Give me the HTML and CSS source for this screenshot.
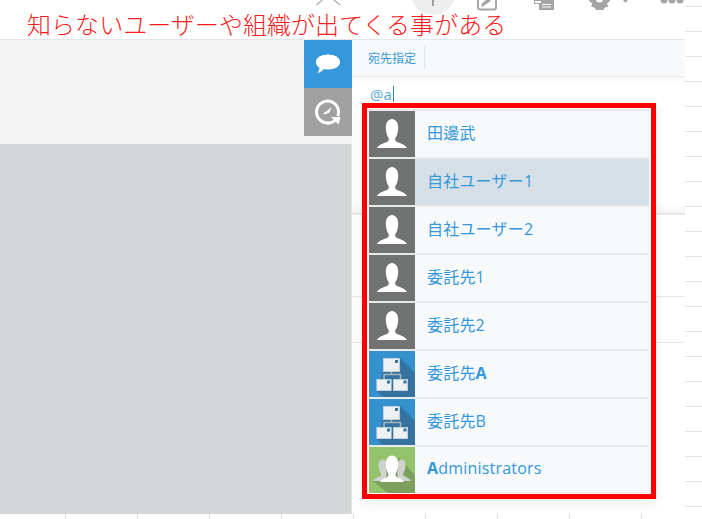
FILE: index.html
```html
<!DOCTYPE html>
<html lang="ja">
<head>
<meta charset="utf-8">
<title>宛先指定</title>
<link rel="stylesheet" href="styles.css">
</head>
<body>
<svg width="0" height="0" class="defs">
  <defs>
    <symbol id="user" viewBox="0 0 46 46">
      <rect width="46" height="46" fill="#717372"/>
      <path d="M8 37C10 33.500 14 32.500 18 31C19.500 30.300 20 29 19.800 27.500C18 25 16.800 21 16.800 17C16.800 11.500 19.200 8 23 8C26.800 8 29.200 11.500 29.200 17C29.200 21 28 25 26.200 27.500C26 29 26.500 30.300 28 31C32 32.500 36 33.500 38 37Z" fill="#fff"/>
    </symbol>
    <symbol id="org" viewBox="0 0 46 46">
      <rect width="46" height="46" fill="#3491cd"/>
      <path d="M31 7L46 22V46H14L7 39L14 20Z" fill="#34739f"/>
      <path d="M22.500 20V23.500M15 28V23.500H31.500V28" fill="none" stroke="#a9b5bd" stroke-width="1.600"/>
      <rect x="14.300" y="7.300" width="16.400" height="13.400" fill="#edf1f3" stroke="#c4d2dc" stroke-width="0.600"/>
      <rect x="7.800" y="28.300" width="14.400" height="11.400" fill="#edf1f3" stroke="#c4d2dc" stroke-width="0.600"/>
      <rect x="24.300" y="28.300" width="14.400" height="11.400" fill="#edf1f3" stroke="#c4d2dc" stroke-width="0.600"/>
      <rect x="26" y="9" width="3" height="3" fill="#34739f"/>
      <rect x="18" y="29.500" width="3" height="3" fill="#34739f"/>
      <rect x="34.500" y="29.500" width="3" height="3" fill="#34739f"/>
    </symbol>
    <symbol id="group" viewBox="0 0 46 46">
      <rect width="46" height="46" fill="#93c36d"/>
      <path d="M30 11L46 28V46H19L4 34Z" fill="#7c9f5c"/>
      <path d="M4 34C6 31 9 30 11 29C12 28 12 27 11.500 26C10 23 9.500 20 9.500 18C9.500 14.500 11.300 12.500 13.500 12.500C15.800 12.500 17.500 14.500 17.500 18V34Z" fill="#cfd2cd"/>
      <path d="M42 34C40 31 37 30 35 29C34 28 34 27 34.500 26C36 23 36.500 20 36.500 18C36.500 14.500 34.700 12.500 32.500 12.500C30.200 12.500 28.500 14.500 28.500 18V34Z" fill="#cfd2cd"/>
      <path d="M11 35C13 31.500 17 31 19 29.500C19.800 28.500 19.500 27 19 26C17.500 23 16.800 19.500 16.800 16.500C16.800 11.500 19.500 8.500 23 8.500C26.500 8.500 29.200 11.500 29.200 16.500C29.200 19.500 28.500 23 27 26C26.500 27 26.200 28.500 27 29.500C29 31 33 31.500 35 35Z" fill="#fff"/>
    </symbol>
  </defs>
</svg>

<header class="toolbar">
  <svg class="toolbar-icons" width="702" height="16" viewBox="0 0 702 16">
    <path d="M316.500 5L328 -5L340 5" fill="none" stroke="#aaa" stroke-width="1.200"/>
    <circle cx="433" cy="-7" r="22" fill="#eee"/>
    <rect x="432" y="0" width="2" height="6" fill="#9e9e9e"/>
    <path d="M478 -2V7C478 8.500 479 9.500 480.500 9.500H494C495.500 9.500 496 8.500 496 7V0" fill="none" stroke="#a5a5a5" stroke-width="2"/>
    <path d="M481 7.500L482 3.500L488 -2L491 1Z" fill="#a5a5a5"/>
    <path d="M534 0V4H539V10H554V0Z" fill="#a5a5a5"/>
    <path d="M535 1V3H541V1Z M542 4H551V5H542Z M542 6.500H551V7.500H542Z" fill="#fff"/>
    <path d="M589 -1H610V1L607 3.500L608.500 6.500L605 7.500L603.500 10H596L594.500 7.500L591 6.500L592.500 3.500L589 1Z" fill="#a5a5a5"/>
    <circle cx="599.500" cy="-1" r="3.500" fill="#fff"/>
    <path d="M623 0H628L625.500 3Z" fill="#a5a5a5"/>
    <circle cx="664" cy="0" r="3.500" fill="#a5a5a5"/>
    <circle cx="672" cy="0" r="3.500" fill="#a5a5a5"/>
    <circle cx="680" cy="0" r="3.500" fill="#a5a5a5"/>
  </svg>
  <h1 class="headline">知らないユーザーや組織が出てくる事がある</h1>
</header>

<main class="workspace">
  <section class="stage">
    <div class="stage-top">
      <div class="tabs">
        <div class="tab tab-comment">
          <svg width="26" height="20" viewBox="0 0 26 20"><path d="M13 0.500C20 0.500 25 3.500 25 8C25 12.500 20 15.500 13 15.500C11.500 15.500 10.500 15.400 9 15C7.500 16.500 5 18.500 2.500 19C3.500 17.500 4.300 15.500 4.500 14C2.500 12.500 1 10.500 1 8C1 3.500 6 0.500 13 0.500Z" fill="#fff"/></svg>
        </div>
        <div class="tab tab-history">
          <svg width="26" height="26" viewBox="0 0 26 26"><path d="M22.800 17A11 11 0 1 0 14 23.900" fill="none" stroke="#fff" stroke-width="3"/><path d="M12 24C15.500 24.300 18.500 23 20.500 21" fill="none" stroke="#fff" stroke-width="3"/><path d="M16 18H25.500L23.500 25.500Z" fill="#fff"/><path d="M8 14.500L12.500 11.500L16.500 8L14.500 13.500L9.500 15.500Z" fill="#fff"/></svg>
        </div>
      </div>
    </div>
    <div class="stage-bottom"></div>
  </section>

  <section class="panel">
    <div class="panel-head"><span class="panel-head-label">宛先指定</span></div>
    <div class="editor"><span class="editor-text">@a</span><span class="caret"></span></div>
    <div class="panel-rule panel-rule-a"></div>
    <div class="panel-rule panel-rule-b"></div>
  </section>

  <div class="gutter"></div>

  <ul class="mentions">
    <li class="mention"><svg class="avatar"><use href="#user"/></svg><span class="mention-name">田邊武</span></li>
    <li class="mention is-active"><svg class="avatar"><use href="#user"/></svg><span class="mention-name">自社ユーザー1</span></li>
    <li class="mention"><svg class="avatar"><use href="#user"/></svg><span class="mention-name">自社ユーザー2</span></li>
    <li class="mention"><svg class="avatar"><use href="#user"/></svg><span class="mention-name">委託先1</span></li>
    <li class="mention"><svg class="avatar"><use href="#user"/></svg><span class="mention-name">委託先2</span></li>
    <li class="mention"><svg class="avatar"><use href="#org"/></svg><span class="mention-name">委託先<b>A</b></span></li>
    <li class="mention"><svg class="avatar"><use href="#org"/></svg><span class="mention-name">委託先B</span></li>
    <li class="mention"><svg class="avatar"><use href="#group"/></svg><span class="mention-name"><b>A</b>dministrators</span></li>
  </ul>
</main>

<div class="ticks"></div>
</body>
</html>
```

FILE: styles.css
```css
* {
  box-sizing: border-box;
}

html,
body {
  margin: 0;
  padding: 0;
}

body {
  width: 702px;
  height: 519px;
  overflow: hidden;
  background: #fff;
  font-family: "Open Sans", "Noto Sans CJK JP", sans-serif;
}

.defs {
  display: block;
  height: 0;
}

.toolbar {
  display: grid;
  height: 40px;
  width: 685px;
  border-bottom: 1px solid #e3e5e8;
}

.toolbar-icons,
.headline {
  grid-area: 1 / 1;
}

.toolbar-icons {
  display: block;
}

.headline {
  margin: 6px 0 0 27px;
  font-family: "Noto Sans CJK JP", sans-serif;
  font-size: 24px;
  font-weight: 300;
  line-height: 36px;
  letter-spacing: 0.05px;
  color: #f81c1c;
  white-space: nowrap;
}

.workspace {
  position: relative;
  display: flex;
  height: 474px;
}

.stage {
  display: flex;
  flex-direction: column;
  width: 352px;
}

.stage-top {
  display: flex;
  justify-content: flex-end;
  height: 104px;
  background: #f4f4f4;
}

.stage-bottom {
  flex: 1;
  background: #d3d7d7;
  border-right: 1px solid #e2e4e4;
}

.tabs {
  width: 48px;
}

.tab {
  display: flex;
  align-items: center;
  justify-content: center;
  height: 48px;
}

.tab-comment {
  background: #3498db;
}

.tab-history {
  background: #a0a0a0;
}

.panel {
  position: relative;
  width: 333px;
  background: #fff;
}

.panel-head {
  display: flex;
  align-items: center;
  height: 37px;
  padding-left: 16px;
  background: #f7f9fa;
  border-bottom: 1px solid #e3e5e8;
}

.panel-head-label {
  height: 24px;
  padding-right: 8px;
  border-right: 1px solid #e3e5e8;
  font-family: "Noto Sans CJK JP", sans-serif;
  font-size: 12px;
  font-weight: 400;
  line-height: 24px;
  color: #3498db;
}

.editor {
  display: flex;
  align-items: center;
  height: 138px;
  padding: 0 0 102px 18px;
  border-bottom: 2px solid #e8e8e8;
  background: linear-gradient(#f8f8f8, #fff 9px, #fff 128px, #f4f4f4);
}

.editor-text {
  font-size: 15px;
  line-height: 18px;
  color: #5aa6dd;
}

.caret {
  width: 1px;
  height: 16px;
  margin-left: 1px;
  background: #3b7fb5;
}

.panel-rule {
  height: 1px;
  background: #e8e8e8;
}

.panel-rule-a {
  margin-top: 81px;
}

.panel-rule-b {
  margin-top: 45px;
}

.gutter {
  flex: 1;
  height: 514px;
  margin-top: -40px;
  background: linear-gradient(#fff 24px, #e2e2e2 24px) 0 7px / 100% 25px;
}

.mentions {
  position: absolute;
  top: 63px;
  left: 362px;
  width: 294px;
  height: 396px;
  margin: 0;
  padding: 1px 2px 0;
  list-style: none;
  background: #fff;
  border: 5px solid #ff0000;
  box-shadow: 0 4px 12px rgba(0, 0, 0, 0.08);
}

.mention {
  display: flex;
  align-items: center;
  height: 48px;
  border-top: 2px solid #e8eaec;
  background: #f7f9fb;
}

.mention:last-child {
  border-bottom: 1px solid #e8eaec;
}

.is-active {
  background: linear-gradient(90deg, #f7f9fb 46px, #d7e0e6 46px);
}

.avatar {
  flex: none;
  width: 46px;
  height: 46px;
}

.mention-name {
  margin: -3px 0 0 12px;
  font-size: 16px;
  font-weight: 400;
  line-height: 24px;
  letter-spacing: 0.2px;
  color: #3498db;
}

.mention-name b {
  font-weight: 700;
}

.ticks {
  height: 5px;
  background: linear-gradient(90deg, #ddd 1px, transparent 1px) 65px 0 / 72px 100%;
}
```
